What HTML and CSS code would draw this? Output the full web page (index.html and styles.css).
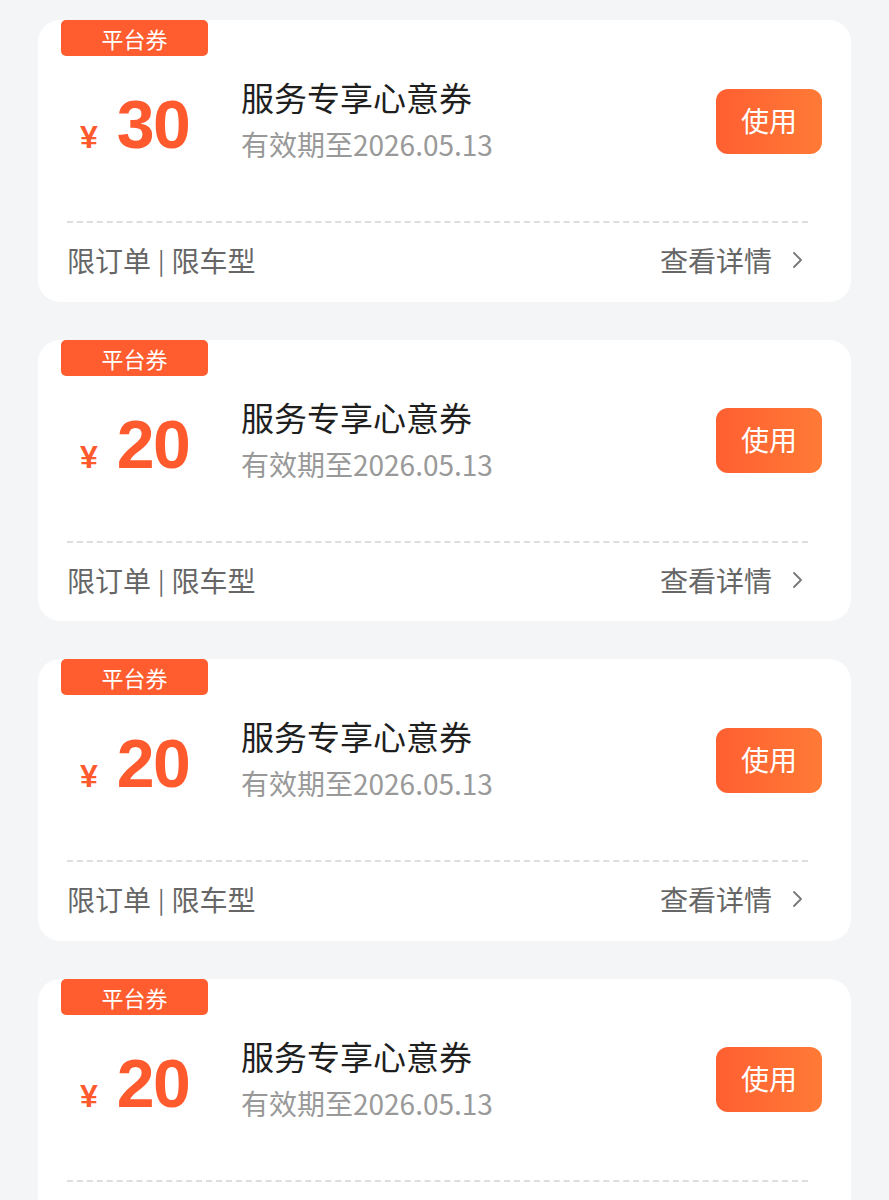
FILE: index.html
```html
<!DOCTYPE html>
<html lang="zh-CN">
<head>
	<meta charset="utf-8">
	<title>优惠券</title>
	<link rel="stylesheet" href="styles.css">
</head>
<body>
	<div class="coupon-list">
		<div class="coupon">
			<div class="coupon-tag">平台券</div>
			<div class="coupon-main">
				<div class="coupon-price"><span class="yen">¥</span><span class="amount">30</span></div>
				<div class="coupon-info">
					<div class="coupon-title">服务专享心意券</div>
					<div class="coupon-date">有效期至2026.05.13</div>
				</div>
				<button class="coupon-btn">使用</button>
			</div>
			<div class="coupon-divider"></div>
			<div class="coupon-foot">
				<span class="coupon-limit">限订单<span class="sep">|</span>限车型</span>
				<span class="coupon-more">查看详情<svg class="chevron" width="12" height="20" viewBox="0 0 12 20"><path d="M2 3 L9 10 L2 17" fill="none" stroke="#777" stroke-width="1.8" stroke-linecap="round" stroke-linejoin="round"/></svg></span>
			</div>
		</div>

		<div class="coupon">
			<div class="coupon-tag">平台券</div>
			<div class="coupon-main">
				<div class="coupon-price"><span class="yen">¥</span><span class="amount">20</span></div>
				<div class="coupon-info">
					<div class="coupon-title">服务专享心意券</div>
					<div class="coupon-date">有效期至2026.05.13</div>
				</div>
				<button class="coupon-btn">使用</button>
			</div>
			<div class="coupon-divider"></div>
			<div class="coupon-foot">
				<span class="coupon-limit">限订单<span class="sep">|</span>限车型</span>
				<span class="coupon-more">查看详情<svg class="chevron" width="12" height="20" viewBox="0 0 12 20"><path d="M2 3 L9 10 L2 17" fill="none" stroke="#777" stroke-width="1.8" stroke-linecap="round" stroke-linejoin="round"/></svg></span>
			</div>
		</div>

		<div class="coupon">
			<div class="coupon-tag">平台券</div>
			<div class="coupon-main">
				<div class="coupon-price"><span class="yen">¥</span><span class="amount">20</span></div>
				<div class="coupon-info">
					<div class="coupon-title">服务专享心意券</div>
					<div class="coupon-date">有效期至2026.05.13</div>
				</div>
				<button class="coupon-btn">使用</button>
			</div>
			<div class="coupon-divider"></div>
			<div class="coupon-foot">
				<span class="coupon-limit">限订单<span class="sep">|</span>限车型</span>
				<span class="coupon-more">查看详情<svg class="chevron" width="12" height="20" viewBox="0 0 12 20"><path d="M2 3 L9 10 L2 17" fill="none" stroke="#777" stroke-width="1.8" stroke-linecap="round" stroke-linejoin="round"/></svg></span>
			</div>
		</div>

		<div class="coupon">
			<div class="coupon-tag">平台券</div>
			<div class="coupon-main">
				<div class="coupon-price"><span class="yen">¥</span><span class="amount">20</span></div>
				<div class="coupon-info">
					<div class="coupon-title">服务专享心意券</div>
					<div class="coupon-date">有效期至2026.05.13</div>
				</div>
				<button class="coupon-btn">使用</button>
			</div>
			<div class="coupon-divider"></div>
			<div class="coupon-foot">
				<span class="coupon-limit">限订单<span class="sep">|</span>限车型</span>
				<span class="coupon-more">查看详情<svg class="chevron" width="12" height="20" viewBox="0 0 12 20"><path d="M2 3 L9 10 L2 17" fill="none" stroke="#777" stroke-width="1.8" stroke-linecap="round" stroke-linejoin="round"/></svg></span>
			</div>
		</div>
	</div>
</body>
</html>
```

FILE: styles.css
```css
body {
	margin: 0;
	background: #f4f5f7;
	font-family: "Noto Sans CJK SC", "Noto Sans", sans-serif;
}

.coupon-list {
	display: flex;
	flex-direction: column;
	gap: 38px;
	padding: 20px 38px;
}

.coupon {
	background: #fff;
	border-radius: 22px;
	height: 281.5px;
	box-sizing: border-box;
	display: flex;
	flex-direction: column;
}

.coupon-tag {
	align-self: flex-start;
	margin-left: 23px;
	width: 147px;
	height: 36px;
	line-height: 36px;
	text-align: center;
	background: #ff5c30;
	color: #fff;
	font-size: 22px;
	border-radius: 5px;
}

.coupon-main {
	display: flex;
	align-items: center;
	height: 130px;
	padding: 0 29px 0 42px;
}

.coupon-price {
	width: 161px;
	color: #ff5a2e;
	font-family: "Liberation Sans", Arial, sans-serif;
	font-weight: bold;
	display: flex;
	align-items: baseline;
	margin-top: 6px;
}

.yen {
	font-size: 32px;
	margin-right: 19px;
}

.amount {
	font-size: 68px;
	letter-spacing: -1.5px;
}

.coupon-info {
	flex: 1;
}

.coupon-title {
	font-size: 33px;
	color: #1f1f1f;
	line-height: 46px;
}

.coupon-date {
	font-size: 28px;
	color: #999;
	line-height: 48px;
}

.coupon-btn {
	width: 106px;
	height: 65px;
	border: none;
	border-radius: 12px;
	background: linear-gradient(90deg, #ff5f31, #ff7a36);
	color: #fff;
	font-family: inherit;
	font-size: 28px;
	padding: 0 0 3px;
}

.coupon-divider {
	margin: 35px 43px 0 29px;
	border-top: 2px dashed #dedede;
}

.coupon-foot {
	flex: 1;
	display: flex;
	align-items: center;
	justify-content: space-between;
	padding: 0 46px 4px 29px;
	font-size: 28px;
	color: #666;
}

.sep {
	font-size: 24px;
	margin: 0 7px;
	color: #666;
	position: relative;
	top: -2px;
}

.coupon-more {
	display: flex;
	align-items: center;
	margin-right: 1px;
}

.chevron {
	margin-left: 20px;
}
```
